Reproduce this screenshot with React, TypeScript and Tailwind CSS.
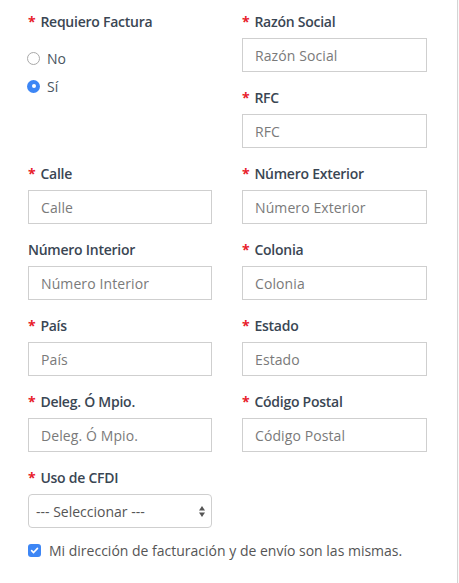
import React from "react";

// Facturación form
const Label = ({ text, req = true }: { text: string; req?: boolean }) => (
  <div className="h-5 leading-5 text-[14px] font-semibold tracking-[-0.25px] text-[#3a4653] mb-[6px]">
    {req && <span className="text-[#e8202a] font-bold mr-[5px]">*</span>}
    {text}
  </div>
);

const Field = ({ label, req = true }: { label: string; req?: boolean }) => (
  <div className="flex flex-col">
    <Label text={label} req={req} />
    <div className="h-[34px] border border-[#cfcfcf] bg-white flex items-center pl-[12px] text-[14px] text-[#7a7a7a] tracking-[0.1px]">
      {label}
    </div>
  </div>
);

const Radio = ({ label, checked }: { label: string; checked?: boolean }) => (
  <div className="flex items-center h-5 gap-[7px]">
    {checked ? (
      <span className="w-[13px] h-[13px] rounded-full bg-[#3d86f5] flex items-center justify-center">
        <span className="w-[4px] h-[4px] rounded-full bg-white" />
      </span>
    ) : (
      <span className="w-[13px] h-[13px] rounded-full border border-[#a9a9a9] bg-white" />
    )}
    <span className="text-[14px] text-[#4a5560]">{label}</span>
  </div>
);

export default function App() {
  return (
    <div className="flex min-h-[583px] bg-[#fafafa]" style={{ fontFamily: '"Open Sans", sans-serif' }}>
      <div className="w-[458px] shrink-0 bg-white border-r border-[#d4d4d4] pl-[28px] pt-[12px]">
        <div className="grid grid-cols-[184px_185px] gap-x-[30px] gap-y-[16px]">
          <div className="flex flex-col">
            <Label text="Requiero Factura" />
            <div className="flex flex-col gap-[8px] mt-[10px] -ml-[1px]">
              <Radio label="No" />
              <Radio label="Sí" checked />
            </div>
          </div>
          <div className="flex flex-col gap-[16px]">
            <Field label="Razón Social" />
            <Field label="RFC" />
          </div>
          <Field label="Calle" />
          <Field label="Número Exterior" />
          <Field label="Número Interior" req={false} />
          <Field label="Colonia" />
          <Field label="País" />
          <Field label="Estado" />
          <Field label="Deleg. Ó Mpio." />
          <Field label="Código Postal" />
          <div className="flex flex-col">
            <Label text="Uso de CFDI" />
            <div className="h-[34px] border border-[#cfcfcf] rounded-[4px] bg-white flex items-center justify-between pl-[7px] pr-[5px] text-[14px] text-[#555]">
              <span>--- Seleccionar ---</span>
              <svg width="8" height="13" viewBox="0 0 8 13">
                <path d="M4 1 L7 5.5 L1 5.5 Z" fill="#555" />
                <path d="M4 12 L7 7.5 L1 7.5 Z" fill="#555" />
              </svg>
            </div>
          </div>
        </div>
        <div className="flex items-center gap-[8px] mt-[12px] h-5">
          <span className="w-[13px] h-[13px] rounded-[3px] bg-[#3d86f5] flex items-center justify-center">
            <svg width="9" height="9" viewBox="0 0 10 10">
              <path d="M1.8 5.2 L4 7.3 L8.3 2.6" stroke="white" strokeWidth="1.8" fill="none" strokeLinecap="round" strokeLinejoin="round" />
            </svg>
          </span>
          <span className="text-[14px] text-[#555]">Mi dirección de facturación y de envío son las mismas.</span>
        </div>
      </div>
    </div>
  );
}
